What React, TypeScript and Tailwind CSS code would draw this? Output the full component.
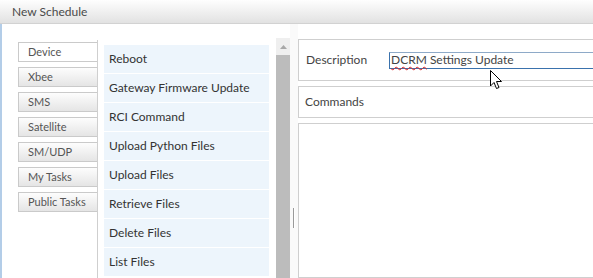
import React from "react";

const tabs = ["Device", "Xbee", "SMS", "Satellite", "SM/UDP", "My Tasks", "Public Tasks"];
const items = [
  "Reboot",
  "Gateway Firmware Update",
  "RCI Command",
  "Upload Python Files",
  "Upload Files",
  "Retrieve Files",
  "Delete Files",
  "List Files",
];

export default function App() {
  return (
    <div
      className="relative w-[593px] h-[278px] overflow-hidden bg-white flex flex-col"
      style={{ fontFamily: "Lato, 'Open Sans', sans-serif" }}
    >
      <div className="h-[24px] shrink-0 flex items-center pl-[12px] text-[12px] text-[#4a4a4a] bg-gradient-to-b from-[#fefefe] to-[#e2e2e2] border-b border-[#d2d2d2]">
        New Schedule
      </div>
      <div className="flex-1 flex border-l-2 border-[#b3cde8] min-h-0">
        {/* tabs column */}
        <div className="ml-[16px] mt-[16px] w-[80px] shrink-0 border-r border-[#cfcfcf] pt-[2px] flex flex-col gap-[5px]">
          {tabs.map((t, i) => (
            <div
              key={t}
              className={
                i === 0
                  ? "h-[20px] flex items-center pl-[9px] text-[11px] text-[#555] bg-white border border-r-0 border-[#cacaca]"
                  : "h-[20px] flex items-center pl-[9px] text-[11px] text-[#555] bg-gradient-to-b from-[#fdfdfd] to-[#e5e5e5] border border-r-0 border-[#cacaca]"
              }
            >
              {t}
            </div>
          ))}
        </div>
        {/* list */}
        <div className="ml-[6px] mt-[21px] w-[165px] shrink-0 flex flex-col gap-[1px]">
          {items.map((it) => (
            <div
              key={it}
              className="h-[28px] shrink-0 flex items-center pl-[5px] text-[12px] text-[#333] bg-[#edf5fc]"
            >
              {it}
            </div>
          ))}
        </div>
        {/* scrollbar */}
        <div className="ml-[7px] mt-[14px] w-[14px] shrink-0 flex flex-col">
          <div className="h-[17px] bg-[#efefef] flex items-center justify-center">
            <svg width="7" height="4" viewBox="0 0 7 4">
              <path d="M0 4 L3.5 0 L7 4 Z" fill="#a8a8a8" />
            </svg>
          </div>
          <div className="flex-1 bg-[#bcbcbc]" />
        </div>
        {/* splitter */}
        <div className="w-[8px] shrink-0 bg-[#fafafa] flex items-start">
          <div className="ml-[3px] mt-[184px] w-[2px] h-[20px] bg-[#9a9a9a] border-r border-white" />
        </div>
        {/* right panel */}
        <div className="mt-[15px] w-[340px] shrink-0 flex flex-col gap-[5px]">
          <div className="h-[42px] shrink-0 border border-[#cfcfcf] flex items-center">
            <div className="w-[90px] pl-[7px] text-[12px] text-[#444]">Description</div>
            <div className="h-[17px] flex-1 border border-[#3a72ad] border-t-[#8eaac8] flex items-center pl-[1px] text-[12px] text-[#444]">
              <span className="underline decoration-wavy decoration-[#e02020] decoration-1 underline-offset-[2px]">DCRM</span>
              <span>&nbsp;Settings Update</span>
            </div>
          </div>
          <div className="h-[32px] shrink-0 border border-[#cfcfcf] flex items-center pl-[6px] text-[12px] text-[#444]">
            Commands
          </div>
          <div className="flex-1 border border-[#cfcfcf]" />
        </div>
      </div>
      {/* mouse cursor */}
      <svg
        className="absolute left-[490px] top-[70px]"
        width="13"
        height="20"
        viewBox="0 0 13 20"
      >
        <path
          d="M0.5 0.5 L0.5 16 L4 12.5 L6.5 18.5 L9 17.5 L6.5 11.5 L11.5 11.5 Z"
          fill="#fff"
          stroke="#000"
          strokeWidth="1"
          strokeLinejoin="miter"
        />
      </svg>
    </div>
  );
}
